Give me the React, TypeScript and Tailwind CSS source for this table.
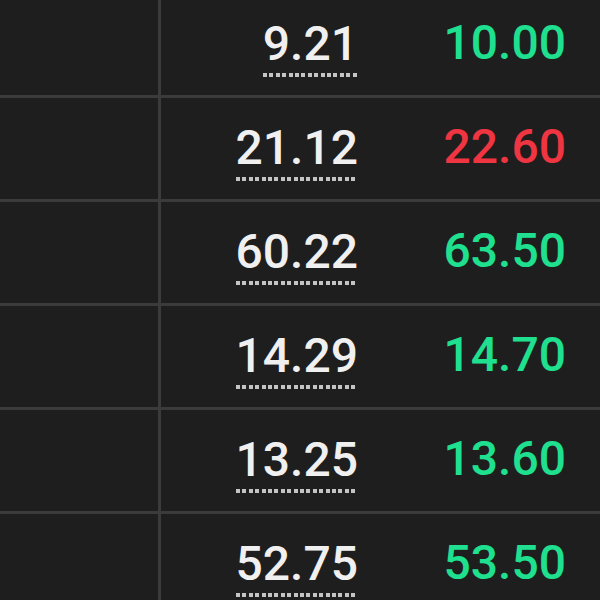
import React from "react";

const rows = [
  { a: "9.21", b: "10.00", up: true },
  { a: "21.12", b: "22.60", up: false },
  { a: "60.22", b: "63.50", up: true },
  { a: "14.29", b: "14.70", up: true },
  { a: "13.25", b: "13.60", up: true },
  { a: "52.75", b: "53.50", up: true },
];

export default function App() {
  return (
    <div
      className="w-[600px] h-[600px] overflow-hidden bg-[#1e1e1e]"
      style={{ fontFamily: "Roboto, 'Liberation Sans', sans-serif" }}
    >
      <div className="-mt-[6px] flex flex-col">
        {rows.map((r, i) => (
          <div
            key={i}
            className="flex h-[104px] shrink-0 border-b-[3px] border-[#3b3b3b]"
          >
            <div className="w-[161px] shrink-0 border-r-[3px] border-[#3b3b3b]" />
            <div className="w-[217px] shrink-0 pr-[20px] flex items-center justify-end">
              <span className="inline-flex flex-col items-stretch pt-[2px]">
                <span className="text-[48px] font-medium leading-[58px] text-[#f0f0f0]">{r.a}</span>
                <span className="block h-[4px] w-full bg-[repeating-linear-gradient(90deg,#c4c4c4_0_4px,transparent_4px_6.4px)]" />
              </span>
            </div>
            <div className="flex-1 pr-[34px] flex items-center justify-end">
              <span
                className={
                  "text-[48px] font-medium leading-[58px] pb-[4px] " +
                  (r.up ? "text-[#1fe08f]" : "text-[#ef3541]")
                }
              >
                {r.b}
              </span>
            </div>
          </div>
        ))}
      </div>
    </div>
  );
}
